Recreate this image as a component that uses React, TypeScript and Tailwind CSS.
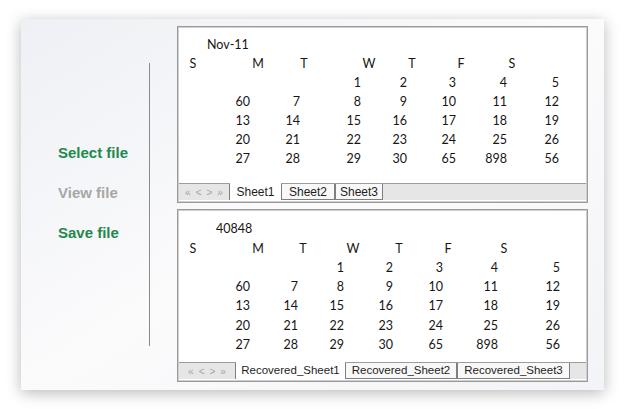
import React from 'react'

const rows = [
  ['', '', '', '1', '2', '3', '4', '5'],
  ['', '60', '7', '8', '9', '10', '11', '12'],
  ['', '13', '14', '15', '16', '17', '18', '19'],
  ['', '20', '21', '22', '23', '24', '25', '26'],
  ['', '27', '28', '29', '30', '65', '898', '56'],
]

const topHeads = [
  { t: 'S', c: 'ml-[6px]' },
  { t: 'M', c: 'ml-[49px]' },
  { t: 'T', c: 'ml-[30px]' },
  { t: 'W', c: 'ml-[49px]' },
  { t: 'T', c: 'ml-[27px]' },
  { t: 'F', c: 'ml-[33px]' },
  { t: 'S', c: 'ml-[35px]' },
]

const bottomHeads = [
  { t: 'S', c: 'ml-[6px]' },
  { t: 'M', c: 'ml-[49px]' },
  { t: 'T', c: 'ml-[29px]' },
  { t: 'W', c: 'ml-[34px]' },
  { t: 'T', c: 'ml-[30px]' },
  { t: 'F', c: 'ml-[33px]' },
  { t: 'S', c: 'ml-[40px]' },
]

interface Tab {
  label: string
  width: string
  active?: boolean
}

function TabBar({ tabs, navWidth, textSize }: { tabs: Tab[]; navWidth: string; textSize: string }) {
  return (
    <div className="flex h-[17px] border-t border-[#9c9c9c] bg-[#e6e6e6]">
      <div
        className={`flex items-center justify-center gap-[5px] border-r border-[#7f7f7f] text-[10px] text-[#a3a3a3] ${navWidth}`}
      >
        <span>«</span>
        <span>&lt;</span>
        <span>&gt;</span>
        <span>»</span>
      </div>
      {tabs.map((tab) =>
        tab.active ? (
          <div
            key={tab.label}
            className={`-mt-px flex items-center justify-center bg-white text-[#1e1e1e] ${tab.width} ${textSize}`}
          >
            {tab.label}
          </div>
        ) : (
          <div
            key={tab.label}
            className={`flex items-center justify-center border-r border-b border-l border-[#7f7f7f] bg-[#f8f8f8] text-[#1e1e1e] ${tab.width} ${textSize}`}
          >
            {tab.label}
          </div>
        ),
      )}
    </div>
  )
}

function Sheet({
  title,
  titleClass,
  heads,
  cols,
  tabs,
  navWidth,
  textSize,
  height,
  topPad,
  rowH,
}: {
  title: string
  titleClass: string
  heads: { t: string; c: string }[]
  cols: string
  tabs: Tab[]
  navWidth: string
  textSize: string
  height: string
  topPad: string
  rowH: string
}) {
  return (
    <div className={`border border-[#9a9a9a] ${height}`}>
      <div className="flex h-full flex-col border border-[#cfcfcf] bg-white">
        <div
          className={`flex-1 text-[12.5px] text-[#161616] ${topPad}`}
          style={{ fontFamily: 'Lato, "Open Sans", sans-serif' }}
        >
          <div className={`flex items-center ${rowH} ${titleClass}`}>{title}</div>
          <div className={`flex items-center ${rowH}`}>
            {heads.map((h, i) => (
              <span key={i} className={`w-4 text-center ${h.c}`}>
                {h.t}
              </span>
            ))}
          </div>
          {rows.map((r, i) => (
            <div key={i} className={`grid items-center ${rowH} ${cols}`}>
              {r.map((v, j) => (
                <span key={j} className="text-right">
                  {v}
                </span>
              ))}
            </div>
          ))}
        </div>
        <div className="pb-px" style={{ fontFamily: '"Liberation Sans", Arial, sans-serif' }}>
          <TabBar tabs={tabs} navWidth={navWidth} textSize={textSize} />
        </div>
      </div>
    </div>
  )
}

export default function App() {
  return (
    <div className="h-[409px] w-[624px] bg-white pt-[19px] pl-[21px]">
      <div className="flex h-[371px] w-[583px] bg-gradient-to-br from-[#eef0f5] via-[#fbfbfc] to-[#f3f4f7] shadow-[0_3px_14px_rgba(0,0,0,0.28)]">
        {/* Left menu */}
        <div
          className="flex w-[128px] flex-col gap-5 pt-[124px] pl-[37px] text-[15px] font-bold"
          style={{ fontFamily: '"Liberation Sans", Arial, sans-serif' }}
        >
          <div className="h-5 leading-5 text-[#23894b]">Select file</div>
          <div className="h-5 leading-5 text-[#a7a7a7]">View file</div>
          <div className="h-5 leading-5 text-[#23894b]">Save file</div>
        </div>
        <div className="mt-[44px] h-[283px] w-px bg-[#8a8a8a]" />

        {/* Sheets */}
        <div className="ml-[27px] flex w-[411px] flex-col gap-[6px] pt-[7px]">
          <Sheet
            title="Nov-11"
            titleClass="pl-[28px]"
            heads={topHeads}
            cols="grid-cols-[21px_50px_50px_61px_46px_49px_51px_52px]"
            tabs={[
              { label: 'Sheet1', width: 'w-[51px]', active: true },
              { label: 'Sheet2', width: 'w-[54px]' },
              { label: 'Sheet3', width: 'w-[48px]' },
            ]}
            navWidth="w-[51px]"
            textSize="text-[12px]"
            height="h-[177px]"
            topPad="pt-[8px]"
            rowH="h-[19px]"
          />
          <Sheet
            title="40848"
            titleClass="pl-[37px]"
            heads={bottomHeads}
            cols="grid-cols-[21px_50px_48px_46px_49px_50px_55px_62px]"
            tabs={[
              { label: 'Recovered_Sheet1', width: 'w-[109px]', active: true },
              { label: 'Recovered_Sheet2', width: 'w-[112px]' },
              { label: 'Recovered_Sheet3', width: 'w-[113px]' },
            ]}
            navWidth="w-[57px]"
            textSize="text-[11.5px]"
            height="h-[173px]"
            topPad="pt-[9px]"
            rowH="h-[19.3px]"
          />
        </div>
      </div>
    </div>
  )
}
